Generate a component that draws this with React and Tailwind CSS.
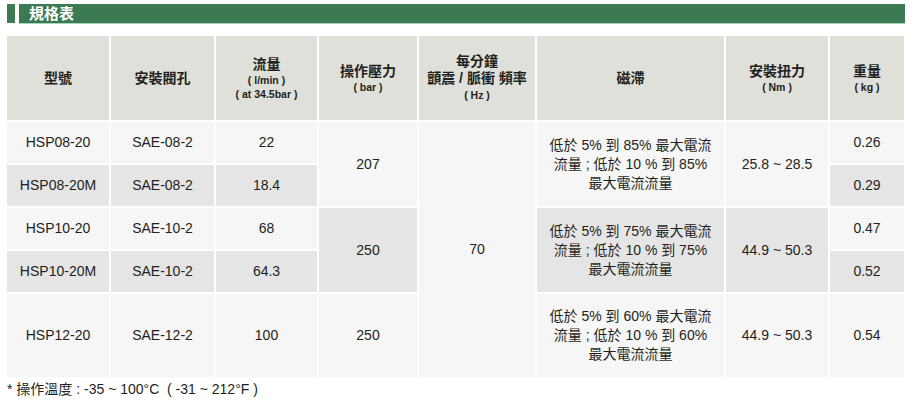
const font = { fontFamily: '"Liberation Sans", "Noto Sans CJK TC", Arial, sans-serif' };

const Cell = ({ className = '', children }) => (
  <div className={`flex flex-col items-center justify-center text-center ${className}`}>{children}</div>
);

const Head = ({ title, units = [] }) => (
  <Cell className="bg-[#dfe0d9] text-[#231f20]">
    {title.map((t) => (
      <div key={t} className="text-[14px] font-bold leading-[18px]">{t}</div>
    ))}
    {units.map((u) => (
      <div key={u} className="text-[10.5px] font-bold leading-[14px]">{u}</div>
    ))}
  </Cell>
);

const Hyst = ({ lines, className }) => (
  <Cell className={`text-[14px] leading-[19px] ${className}`}>
    {lines.map((l) => (
      <div key={l}>{l}</div>
    ))}
  </Cell>
);

const App = () => {
  const light = 'bg-[#f6f6f6]';
  const gray = 'bg-[#e5e5e5]';

  return (
    <div className="w-[914px] h-[404px] bg-white text-[#231f20]" style={font}>
      {/* title bar */}
      <div className="flex pt-[4px] pl-[7px] pr-[9px] gap-[4px]">
        <div className="w-[8px] h-[19px] bg-[#3c7a54]" />
        <div className="flex-1 h-[20px] bg-[#3c7a54] border-b border-[#a8d4bb] flex items-center pl-[10px]">
          <span className="text-white text-[15px] font-bold leading-none">規格表</span>
        </div>
      </div>

      {/* table */}
      <div className="px-[7px] mt-[12px]">
        <div className="grid w-[897px] grid-cols-[102px_103px_101px_98px_116px_187px_102px_74px] grid-rows-[84px_41px_41px_41px_41px_83px] gap-[2px] text-[14px]">
          <Head title={['型號']} />
          <Head title={['安裝閥孔']} />
          <Head title={['流量']} units={['( l/min )', '( at 34.5bar )']} />
          <Head title={['操作壓力']} units={['( bar )']} />
          <Cell className="bg-[#dfe0d9]">
            <div className="text-[14px] font-bold leading-[17px]">每分鐘</div>
            <div className="text-[14px] font-bold leading-[17px]">顫震 / 脈衝 頻率</div>
            <div className="text-[10.5px] font-bold leading-[16px]">( Hz )</div>
          </Cell>
          <Head title={['磁滯']} />
          <Head title={['安裝扭力']} units={['( Nm )']} />
          <Head title={['重量']} units={['( kg )']} />

          {/* row 1 */}
          <Cell className={`${light} col-start-1 row-start-2`}>HSP08-20</Cell>
          <Cell className={`${light} col-start-2 row-start-2`}>SAE-08-2</Cell>
          <Cell className={`${light} col-start-3 row-start-2`}>22</Cell>
          <Cell className={`${light} col-start-4 row-start-2 row-span-2`}>207</Cell>
          <Cell className={`${light} col-start-5 row-start-2 row-span-5`}>70</Cell>
          <Hyst className={`${light} col-start-6 row-start-2 row-span-2`} lines={['低於 5% 到 85% 最大電流', '流量 ; 低於 10 % 到 85%', '最大電流流量']} />
          <Cell className={`${light} col-start-7 row-start-2 row-span-2`}>25.8 ~ 28.5</Cell>
          <Cell className={`${light} col-start-8 row-start-2`}>0.26</Cell>

          {/* row 2 */}
          <Cell className={`${gray} col-start-1 row-start-3`}>HSP08-20M</Cell>
          <Cell className={`${gray} col-start-2 row-start-3`}>SAE-08-2</Cell>
          <Cell className={`${gray} col-start-3 row-start-3`}>18.4</Cell>
          <Cell className={`${gray} col-start-8 row-start-3`}>0.29</Cell>

          {/* row 3 */}
          <Cell className={`${light} col-start-1 row-start-4`}>HSP10-20</Cell>
          <Cell className={`${light} col-start-2 row-start-4`}>SAE-10-2</Cell>
          <Cell className={`${light} col-start-3 row-start-4`}>68</Cell>
          <Cell className={`${gray} col-start-4 row-start-4 row-span-2`}>250</Cell>
          <Hyst className={`${gray} col-start-6 row-start-4 row-span-2`} lines={['低於 5% 到 75% 最大電流', '流量 ; 低於 10 % 到 75%', '最大電流流量']} />
          <Cell className={`${gray} col-start-7 row-start-4 row-span-2`}>44.9 ~ 50.3</Cell>
          <Cell className={`${light} col-start-8 row-start-4`}>0.47</Cell>

          {/* row 4 */}
          <Cell className={`${gray} col-start-1 row-start-5`}>HSP10-20M</Cell>
          <Cell className={`${gray} col-start-2 row-start-5`}>SAE-10-2</Cell>
          <Cell className={`${gray} col-start-3 row-start-5`}>64.3</Cell>
          <Cell className={`${gray} col-start-8 row-start-5`}>0.52</Cell>

          {/* row 5 */}
          <Cell className={`${light} col-start-1 row-start-6`}>HSP12-20</Cell>
          <Cell className={`${light} col-start-2 row-start-6`}>SAE-12-2</Cell>
          <Cell className={`${light} col-start-3 row-start-6`}>100</Cell>
          <Cell className={`${light} col-start-4 row-start-6`}>250</Cell>
          <Hyst className={`${light} col-start-6 row-start-6`} lines={['低於 5% 到 60% 最大電流', '流量 ; 低於 10 % 到 60%', '最大電流流量']} />
          <Cell className={`${light} col-start-7 row-start-6`}>44.9 ~ 50.3</Cell>
          <Cell className={`${light} col-start-8 row-start-6`}>0.54</Cell>
        </div>

        <div className="mt-[2px] text-[14px] leading-[20px]">* 操作溫度 : -35 ~ 100°C &nbsp;( -31 ~ 212°F )</div>
      </div>
    </div>
  );
};

export default App;
